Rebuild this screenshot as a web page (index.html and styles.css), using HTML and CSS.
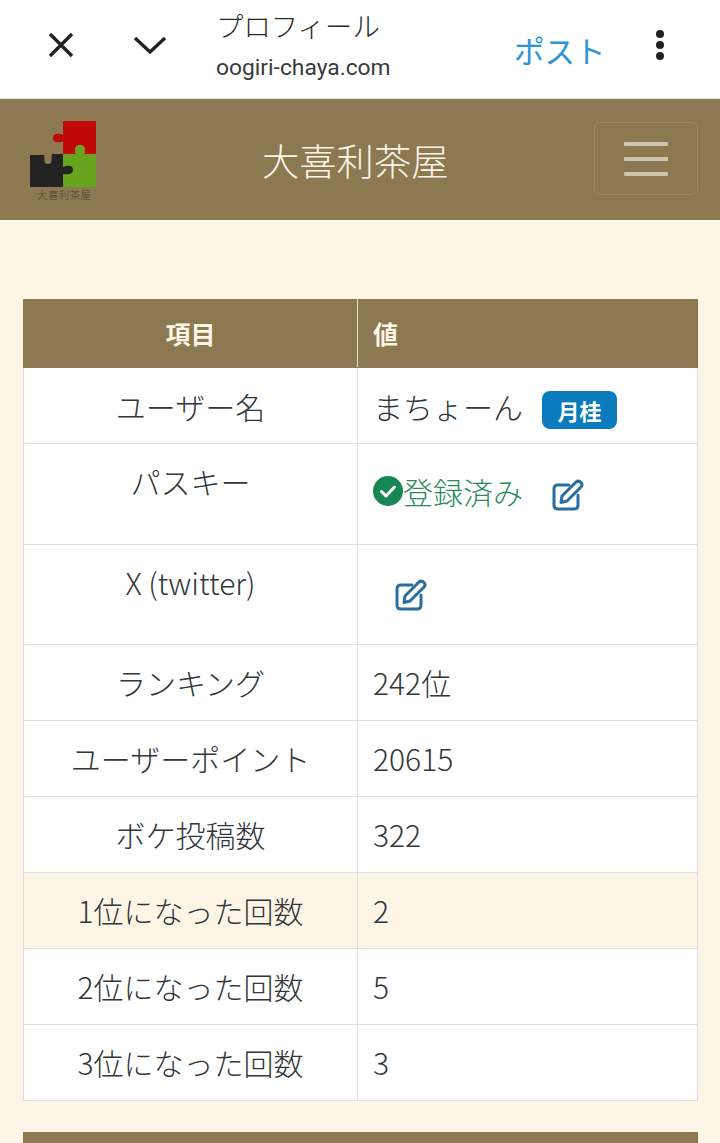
FILE: index.html
```html
<!DOCTYPE html>
<html lang="ja">
<head>
    <meta charset="utf-8">
    <title>プロフィール</title>
    <link rel="stylesheet" href="styles.css">
</head>

<body>

    <!-- Browser top bar -->
    <div class="browser-bar">
        <svg class="bar-icon close-icon" viewBox="0 0 28 28"><path d="M3 3 L25 25 M25 3 L3 25"/></svg>
        <svg class="bar-icon chevron-icon" viewBox="0 0 34 20"><path d="M2 3 L17 17 L32 3"/></svg>
        <div class="bar-title">
            <div class="page-title">プロフィール</div>
            <div class="page-url">oogiri-chaya.com</div>
        </div>
        <span class="post-link">ポスト</span>
        <div class="more-dots"><span></span><span></span><span></span></div>
    </div>

    <!-- Site navbar -->
    <header class="navbar">
        <div class="logo">
            <svg viewBox="0 0 68 82" width="68" height="82">
                <path fill="#c10a08" d="M33 1 H66 V34 H54 C56 30 55 25 50 25 C45 25 44 30 46 34 H33 V21 C29 23 23 23 23 18 C23 13 29 13 33 15 Z"/>
                <path fill="#66a51d" d="M33 34 H46 C44 30 45 25 50 25 C55 25 56 30 54 34 H66 V67 H33 V54 C38 55 43 54 43 50 C43 45 38 45 33 47 Z"/>
                <path fill="#222222" d="M0 35 H14 C15 39 13 44 18 44 C23 44 21 39 22 34 H33 V47 C38 45 43 45 43 50 C43 54 38 55 33 54 V67 H0 Z"/>
            </svg>
            <span class="logo-text">大喜利茶屋</span>
        </div>
        <div class="brand">大喜利茶屋</div>
        <button class="menu-toggle"><span></span><span></span><span></span></button>
    </header>

    <main class="content-block">
        <table class="profile-table">
            <thead>
                <tr>
                    <th class="col-item">項目</th>
                    <th class="col-value">値</th>
                </tr>
            </thead>
            <tbody>
                <tr class="name-row">
                    <td class="col-item">ユーザー名</td>
                    <td class="col-value">まちょーん<span class="badge">月桂</span></td>
                </tr>
                <tr class="tall">
                    <td class="col-item">パスキー</td>
                    <td class="col-value">
                        <div class="passkey">
                            <svg class="check-icon" viewBox="0 0 30 30"><circle cx="15" cy="15" r="15" fill="#198754"/><path d="M8.5 15.5 L13 20 L21.5 11" fill="none" stroke="#fff" stroke-width="3" stroke-linecap="round" stroke-linejoin="round"/></svg>
                            <span class="registered">登録済み</span>
                            <svg class="edit-icon" viewBox="0 0 32 32"><path d="M17 6 H6 Q2 6 2 10 V26 Q2 30 6 30 H22 Q26 30 26 26 V16"/><path d="M10 17 L24 3 Q26.500 1 29 3.500 Q31 6 29 8 L15 22 L9 23.500 Z"/></svg>
                        </div>
                    </td>
                </tr>
                <tr class="tall">
                    <td class="col-item">X (twitter)</td>
                    <td class="col-value">
                        <div class="twitter-edit">
                            <svg class="edit-icon" viewBox="0 0 32 32"><path d="M17 6 H6 Q2 6 2 10 V26 Q2 30 6 30 H22 Q26 30 26 26 V16"/><path d="M10 17 L24 3 Q26.500 1 29 3.500 Q31 6 29 8 L15 22 L9 23.500 Z"/></svg>
                        </div>
                    </td>
                </tr>
                <tr>
                    <td class="col-item">ランキング</td>
                    <td class="col-value">242位</td>
                </tr>
                <tr>
                    <td class="col-item">ユーザーポイント</td>
                    <td class="col-value">20615</td>
                </tr>
                <tr>
                    <td class="col-item">ボケ投稿数</td>
                    <td class="col-value">322</td>
                </tr>
                <tr class="highlight">
                    <td class="col-item">1位になった回数</td>
                    <td class="col-value">2</td>
                </tr>
                <tr>
                    <td class="col-item">2位になった回数</td>
                    <td class="col-value">5</td>
                </tr>
                <tr>
                    <td class="col-item">3位になった回数</td>
                    <td class="col-value">3</td>
                </tr>
            </tbody>
        </table>

        <div class="next-table-head"></div>
    </main>

</body>
</html>
```

FILE: styles.css
```css
/* Base Styles */
html, body {
    height: 1143px;
    overflow: hidden;
}

body {
    margin: 0;
    padding: 0;
    background-color: #fdf5e6;
    color: #33363a;
    font-family: 'Noto Sans CJK JP', 'Noto Sans', sans-serif;
    font-weight: 200;
}

/* Browser Bar */
.browser-bar {
    display: flex;
    align-items: center;
    height: 98px;
    background: white;
    border-bottom: 1px solid #e4e2e2;
}

.bar-icon {
    fill: none;
    stroke: #222;
    stroke-width: 3.4;
    flex: none;
}

.close-icon {
    width: 28px;
    height: 28px;
    margin-left: 47px;
    margin-top: -8px;
}

.chevron-icon {
    width: 34px;
    height: 20px;
    margin-left: 58px;
    margin-top: -8px;
}

.bar-title {
    margin-left: 49px;
    width: 297px;
    margin-top: -8px;
}

.page-title {
    font-size: 27.4px;
    line-height: 34px;
    font-weight: 300;
    color: #2a2a2a;
}

.page-url {
    font-family: 'Roboto', sans-serif;
    font-size: 22.8px;
    line-height: 30px;
    margin-top: 11px;
    font-weight: 400;
    color: #3a3a3a;
}

.post-link {
    font-size: 30.5px;
    font-weight: 400;
    color: #2d94d6;
    margin-left: 1px;
    margin-top: 2px;
}

.more-dots {
    display: flex;
    flex-direction: column;
    gap: 3px;
    margin-left: 50px;
    margin-top: -8px;
}

.more-dots span {
    width: 8px;
    height: 8px;
    border-radius: 50%;
    background: #222;
}

/* Navbar */
.navbar {
    display: flex;
    align-items: center;
    height: 121px;
    background: #8c7851;
    position: relative;
}

.logo {
    margin-left: 30px;
    width: 68px;
    height: 82px;
    margin-top: 2px;
    position: relative;
}

.logo svg {
    display: block;
}

.logo-text {
    position: absolute;
    left: 7px;
    bottom: 0;
    font-family: 'Liberation Serif', 'Noto Sans CJK JP', serif;
    font-size: 10.400px;
    letter-spacing: 0.500px;
    line-height: 13px;
    color: #51462f;
    white-space: nowrap;
}

.brand {
    margin-left: 164px;
    font-size: 37.3px;
    color: #fdf5e6;
    font-weight: 300;
    white-space: nowrap;
}

.menu-toggle {
    position: absolute;
    left: 594px;
    top: 23px;
    width: 104px;
    height: 73px;
    display: flex;
    flex-direction: column;
    justify-content: center;
    align-items: center;
    gap: 11px;
    padding: 0;
    background: transparent;
    border: 1px solid #9a8761;
    border-radius: 6px;
}

.menu-toggle span {
    width: 44px;
    height: 4px;
    border-radius: 1px;
    background: #cfc5ae;
}

/* Content */
.content-block {
    padding: 79px 22px 0 23px;
}

.profile-table {
    width: 675px;
    border-collapse: collapse;
    table-layout: fixed;
    background: white;
}

.profile-table th {
    box-sizing: border-box;
    height: 68px;
    padding: 0 15px 2px;
    background-color: #8c7851;
    color: #fdf5e6;
    font-size: 25px;
    font-weight: 700;
    border: 1px solid #8c7851;
    border-right: 1px solid #e6e2d8;
}

.profile-table th:last-child {
    border-right: 1px solid #8c7851;
}

.profile-table td {
    height: 76px;
    padding: 0 15px 2px;
    font-size: 30px;
    border: 1px solid #dfdfdf;
    box-sizing: border-box;
    vertical-align: middle;
}

.profile-table .name-row td {
    padding: 1px 15px 0;
}

.col-item {
    width: 334px;
    text-align: center;
}

th.col-value, td.col-value {
    text-align: left;
}

.tall td {
    height: 100.500px;
}

.tall td.col-item {
    vertical-align: top;
    padding-top: 15px;
}

.highlight td {
    background: #fdf5e6;
}

.badge {
    display: inline-block;
    margin-left: 19px;
    padding: 0 15.500px;
    height: 38px;
    line-height: 38px;
    border-radius: 8px;
    background: #0a7cbd;
    color: white;
    font-size: 22px;
    font-weight: 700;
    vertical-align: -1px;
}

.passkey {
    display: flex;
    align-items: center;
    margin-top: -4px;
}

.check-icon {
    width: 30px;
    height: 30px;
    flex: none;
}

.registered {
    color: #2b8a5e;
}

.edit-icon {
    width: 32px;
    height: 32px;
    flex: none;
    fill: none;
    stroke: #2a6d9f;
    stroke-width: 3;
    stroke-linejoin: round;
    stroke-linecap: round;
    display: block;
}

.passkey .edit-icon {
    margin-left: 29px;
    margin-top: 8px;
}

.twitter-edit {
    padding-left: 22px;
    margin-top: 4px;
}

.next-table-head {
    margin-top: 31px;
    width: 675px;
    height: 40px;
    background: #8c7851;
}
```
